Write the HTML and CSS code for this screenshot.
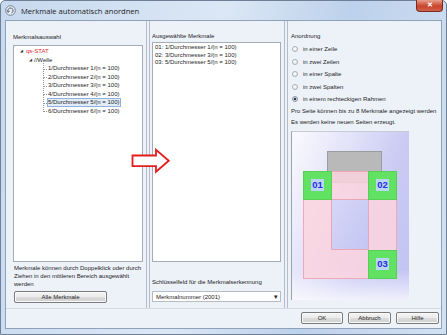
FILE: index.html
```html
<!DOCTYPE html>
<html lang="de">

<head>
  <meta charset="UTF-8" />
  <title>Merkmale automatisch anordnen</title>
  <link rel="stylesheet" href="styles.css">
</head>

<body>
  <div class="window">
    <div class="titlebar">
      <svg class="app-icon" width="11" height="11" viewBox="0 0 11 11">
        <circle cx="5.5" cy="5.5" r="4.8" fill="#e8eef6" stroke="#6a7a8c" stroke-width="0.9" />
        <path d="M3.2 6.8 A2.6 2.6 0 1 1 6.4 8" fill="none" stroke="#4c5c70" stroke-width="1" />
        <path d="M2 5.6 L3.3 7.4 L4.6 5.8" fill="none" stroke="#4c5c70" stroke-width="0.9" />
      </svg>
      <span class="title">Merkmale automatisch anordnen</span>
      <div class="close">&#x2715;</div>
    </div>

    <div class="client">
      <div class="panels">
        <section class="panel left">
          <div class="label">Merkmalsauswahl</div>
          <div class="box tree">
            <div class="node root"><span class="twisty">&#x25E2;</span><span class="stat">qs-STAT</span></div>
            <div class="node group"><span class="twisty">&#x25E2;</span>//Welle</div>
            <div class="leaves">
              <div class="leaf">1/Durchmesser 1/(n = 100)</div>
              <div class="leaf">2/Durchmesser 2/(n = 100)</div>
              <div class="leaf">3/Durchmesser 3/(n = 100)</div>
              <div class="leaf">4/Durchmesser 4/(n = 100)</div>
              <div class="leaf selected">5/Durchmesser 5/(n = 100)</div>
              <div class="leaf last">6/Durchmesser 6/(n = 100)</div>
            </div>
          </div>
          <p class="hint">Merkmale können durch Doppelklick oder durch Ziehen in den mittleren Bereich ausgewählt werden</p>
          <button class="btn all">Alle Merkmale</button>
        </section>

        <section class="panel middle">
          <div class="label">Ausgewählte Merkmale</div>
          <div class="box list">
            <div>01: 1/Durchmesser 1/(n = 100)</div>
            <div>02: 3/Durchmesser 3/(n = 100)</div>
            <div>03: 5/Durchmesser 5/(n = 100)</div>
          </div>
          <div class="label key">Schlüsselfeld für die Merkmalserkennung</div>
          <div class="combo"><span>Merkmalnummer (2001)</span><span class="caret">&#x25BE;</span></div>
        </section>

        <section class="panel right">
          <div class="label">Anordnung</div>
          <div class="radio"><span class="dot"></span>in einer Zeile</div>
          <div class="radio"><span class="dot"></span>in zwei Zeilen</div>
          <div class="radio"><span class="dot"></span>in einer Spalte</div>
          <div class="radio"><span class="dot"></span>in zwei Spalten</div>
          <div class="radio"><span class="dot checked"></span>in einem rechteckigen Rahmen</div>
          <p class="info">Pro Seite können bis zu 8 Merkmale angezeigt werden</p>
          <p class="info">Es werden keine neuen Seiten erzeugt.</p>
          <div class="preview-row">
            <div class="preview">
              <div class="shape page"></div>
              <div class="shape ring"></div>
              <div class="shape hole"></div>
              <div class="shape cell c1"><span>01</span></div>
              <div class="shape cell c2"><span>02</span></div>
              <div class="shape cell c3"><span>03</span></div>
            </div>
          </div>
        </section>
      </div>

      <div class="footer">
        <button class="btn ok">OK</button>
        <button class="btn">Abbruch</button>
        <button class="btn">Hilfe</button>
      </div>
    </div>

    <svg class="arrow" width="40" height="26" viewBox="0 0 40 26">
      <path d="M1.5 7.5 H25 V1.8 L37.8 12.8 L25 23.8 V18.2 H1.5 Z" fill="#fff" stroke="#e41c1c" stroke-width="1.8" />
    </svg>
  </div>
</body>

</html>
```

FILE: styles.css
```css
html,
body {
  margin: 0;
  padding: 0;
}

body {
  font-family: "Liberation Sans", Arial, sans-serif;
  font-size: 6px;
  color: #1e1e1e;
  background: #fff;
}

.window {
  position: relative;
  width: 447px;
  height: 335px;
  box-sizing: border-box;
  border: 1px solid #6f8096;
  border-radius: 5px 5px 0 0;
  background: linear-gradient(100deg, #c7d9ef 0%, #dbe7f5 45%, #bcd1eb 70%, #d3e1f2 100%);
  display: flex;
  flex-direction: column;
  padding: 0 4px 5px 4px;
}

.titlebar {
  height: 19px;
  display: flex;
  align-items: center;
  gap: 5px;
}

.app-icon {
  flex: none;
}

.title {
  font-family: "Open Sans", "Liberation Sans", sans-serif;
  font-size: 7.6px;
  color: #1a1a1a;
  flex: 1;
}

.close {
  align-self: flex-start;
  width: 25px;
  height: 11px;
  margin-top: -1px;
  margin-right: -1px;
  border: 1px solid #7a2b22;
  border-top: none;
  border-radius: 0 0 4px 4px;
  background: linear-gradient(#e8a08c, #c8442c 55%, #d0604a);
  color: #fff;
  font-size: 7px;
  font-weight: bold;
  text-align: center;
  line-height: 10px;
}

.client {
  flex: 1;
  display: flex;
  flex-direction: column;
  background: #edf2f9;
  border: 1px solid #8fa1b8;
}

.panels {
  flex: 1;
  display: flex;
  gap: 2px;
}

.panel {
  display: flex;
  flex-direction: column;
  box-sizing: border-box;
}

.panel.left {
  width: 141px;
  padding: 12px 3px 5px 7px;
  border-right: 1px solid #b3bdca;
}

.panel.middle {
  width: 136px;
  padding: 11px 3px 6px 2px;
  border-left: 1px solid #b3bdca;
  border-right: 1px solid #b3bdca;
}

.panel.right {
  flex: 1;
  padding: 11px 0 8px 3px;
  border-left: 1px solid #b3bdca;
}

.label {
  height: 8px;
  line-height: 8px;
  white-space: nowrap;
}

.box {
  flex: 1;
  background: #fff;
  border: 1px solid #a3acb8;
}

.tree {
  margin-top: 4px;
  padding-top: 1px;
  line-height: 8.5px;
}

.node {
  white-space: nowrap;
}

.twisty {
  display: inline-block;
  width: 5px;
  font-size: 4px;
  color: #333;
  vertical-align: top;
}

.root {
  padding-left: 6px;
}

.stat {
  color: #e02a2a;
  padding-left: 1px;
}

.group {
  padding-left: 15px;
}

.leaves {
  position: relative;
  margin-left: 29px;
}

.leaf {
  position: relative;
  padding-left: 5px;
  white-space: nowrap;
  width: max-content;
  box-sizing: border-box;
}

.leaf::before {
  content: "";
  position: absolute;
  left: 0;
  top: -4px;
  height: 8.5px;
  width: 3px;
  border-left: 1px dotted #9a9a9a;
  border-bottom: 1px dotted #9a9a9a;
}

.leaf.selected {
  background: #e3edf9;
  outline: 1px solid #8fb2dc;
  outline-offset: -1px;
  margin-left: 4px;
  padding-left: 1px;
  padding-right: 1px;
}

.leaf.selected::before {
  left: -4px;
}

.hint {
  margin: 2px 0 0 1px;
  line-height: 8px;
  height: 24px;
}

.btn {
  font-family: "Liberation Sans", Arial, sans-serif;
  font-size: 6px;
  color: #1e1e1e;
  height: 12px;
  padding: 0;
  border: 1px solid #7a7a7a;
  border-radius: 2px;
  background: linear-gradient(#f4f4f4, #eaeaea 50%, #dcdcdc 51%, #cfcfcf);
  box-shadow: inset 0 0 0 1px #fafafa;
}

.btn.all {
  margin-top: 3px;
  margin-left: 1px;
  width: 93px;
}

.list {
  margin-top: 2px;
  padding: 1px 0 0 2px;
  line-height: 7.5px;
}

.key {
  margin-top: 16px;
}

.combo {
  margin-top: 5px;
  height: 11px;
  box-sizing: border-box;
  border: 1px solid #b5bcc6;
  background: #fff;
  display: flex;
  align-items: center;
  justify-content: space-between;
  padding: 0 2px 0 3px;
}

.caret {
  font-size: 7px;
  color: #222;
}

.panel.right .label {
  margin-bottom: 3px;
}

.radio {
  height: 12.5px;
  display: flex;
  align-items: center;
  gap: 5px;
  padding-left: 1px;
  white-space: nowrap;
}

.dot {
  width: 6px;
  height: 6px;
  box-sizing: border-box;
  border-radius: 50%;
  border: 1px solid #a9b0b8;
  background: radial-gradient(circle at 40% 35%, #fff, #dde2e8);
}

.dot.checked {
  background: radial-gradient(circle, #2d3a4a 0 1.4px, #dde2e8 1.6px);
  border-color: #8a96a4;
}

.info {
  margin: 0;
  height: 11px;
  line-height: 11px;
  white-space: nowrap;
}

.preview-row {
  flex: 1;
  margin-top: 3px;
  display: flex;
}

.preview {
  position: relative;
  width: 117px;
  border-left: 1px solid #9aa3ae;
  border-top: 1px solid #c7cdd6;
  background:
    linear-gradient(to bottom, rgba(255, 255, 255, 0) 82%, rgba(255, 255, 255, 0.75) 100%),
    linear-gradient(110deg, #fafafe 0%, #e2e2f9 35%, #cacaf4 65%, #c2c3f3 100%);
}

.shape {
  position: absolute;
  box-sizing: border-box;
}

.page {
  left: 35px;
  top: 19px;
  width: 55px;
  height: 32px;
  background: #b9b9b9;
  border: 1px solid #9c9c9c;
}

.ring {
  left: 11px;
  top: 39px;
  width: 94px;
  height: 108px;
  background: rgba(252, 212, 222, 0.85);
  border: 1px solid #f0a8b8;
}

.hole {
  left: 39px;
  top: 67px;
  width: 38px;
  height: 51px;
  background: linear-gradient(120deg, #d6d6f8, #c4c6f3);
  border: 1px solid #e8a8b8;
}

.cell {
  width: 29px;
  height: 29px;
  background: #62e262;
  border: 1px solid #58d058;
  display: flex;
  align-items: center;
  justify-content: center;
}

.cell span {
  font-family: "Liberation Sans", Arial, sans-serif;
  font-size: 9.5px;
  font-weight: bold;
  color: #2a2ae6;
  background: #b9d6f2;
  padding: 1px 1px;
  line-height: 10px;
}

.c1 {
  left: 11px;
  top: 39px;
}

.c2 {
  left: 76px;
  top: 39px;
}

.c3 {
  left: 76px;
  top: 118px;
}

.footer {
  height: 16px;
  display: flex;
  justify-content: flex-end;
  align-items: flex-start;
  gap: 5px;
  padding: 3px 2px 0 0;
  border-top: 1px solid #d3dbe6;
}

.footer .btn {
  width: 43px;
  height: 12px;
}

.footer .btn.ok {
  width: 42px;
}

.arrow {
  position: absolute;
  left: 130px;
  top: 147px;
}
```
